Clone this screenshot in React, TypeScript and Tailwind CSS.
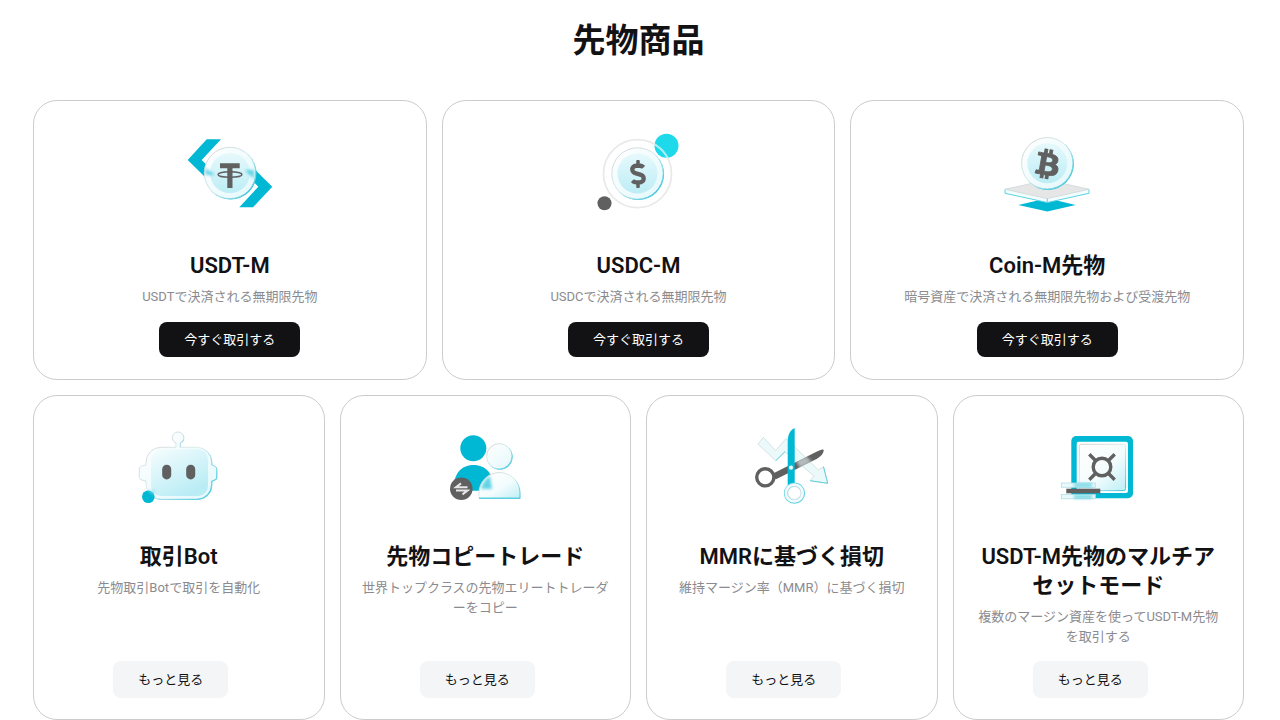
import { ReactNode } from "react";
import { FaBtc, FaDollarSign } from "react-icons/fa";

interface Product {
  title: string;
  text: string;
  icon: ReactNode;
}

// shared gradients, referenced by id from every icon
function Gradients() {
  return (
    <svg className="absolute h-0 w-0" aria-hidden="true">
      <defs>
        <linearGradient id="rim" x1="0" y1="0" x2="1" y2="1">
          <stop offset="0" stopColor="#d2d2d2" />
          <stop offset="0.5" stopColor="#dcecee" />
          <stop offset="1" stopColor="#2fc3da" />
        </linearGradient>
        <linearGradient id="glass" x1="0" y1="0" x2="1" y2="1">
          <stop offset="0" stopColor="#ffffff" />
          <stop offset="0.55" stopColor="#f4fcfd" />
          <stop offset="1" stopColor="#bdeff6" />
        </linearGradient>
        <linearGradient id="pale" x1="0" y1="0" x2="1" y2="1">
          <stop offset="0" stopColor="#ffffff" />
          <stop offset="1" stopColor="#e4f8fb" />
        </linearGradient>
        <linearGradient id="face" x1="0" y1="0" x2="0" y2="1">
          <stop offset="0" stopColor="#e6f9fc" />
          <stop offset="1" stopColor="#bdedf5" />
        </linearGradient>
        <linearGradient id="panel" x1="0" y1="0" x2="0.6" y2="1">
          <stop offset="0" stopColor="#f6fdfe" />
          <stop offset="1" stopColor="#b9ecf5" />
        </linearGradient>
        <filter id="soft" x="-30%" y="-30%" width="160%" height="160%">
          <feGaussianBlur stdDeviation="1.4" />
        </filter>
      </defs>
    </svg>
  );
}

function Icon({ children }: { children: ReactNode }) {
  return (
    <svg
      viewBox="0 0 120 100"
      className="h-[100px] w-[120px] shrink-0"
      fill="none"
      aria-hidden="true"
    >
      {children}
    </svg>
  );
}

function Coin({ cx, cy }: { cx: number; cy: number }) {
  return (
    <>
      <circle cx={cx + 0.6} cy={cy + 0.6} r="26" fill="#35c3d9" />
      <circle cx={cx} cy={cy} r="25.7" fill="url(#pale)" stroke="url(#rim)" />
      <circle cx={cx} cy={cy} r="20" fill="url(#face)" />
    </>
  );
}

const usdtIcon = (
  <Icon>
    <path d="M36.7 14.3H51L31.7 35 48 51H34L17.7 35z" fill="#00b8d4" />
    <path d="M83 82.3H69.3L88.3 61.7 73 45.7H86L102.3 61.7z" fill="#00b8d4" />
    <Coin cx={60} cy={48} />
    <path d="M35 43L45 50H36z" fill="#00b8d4" opacity="0.6" filter="url(#soft)" />
    <path d="M75 45H84V54z" fill="#00b8d4" opacity="0.6" filter="url(#soft)" />
    <path d="M50 38.3H69.7V43.3H62.5V63H57.3V43.3H50z" fill="#606060" />
    <ellipse cx="60" cy="49.5" rx="12" ry="2.8" stroke="#606060" strokeWidth="1.4" />
  </Icon>
);

const usdcIcon = (
  <Icon>
    <circle cx="88.5" cy="20.7" r="12" fill="#1dd9ea" />
    <Coin cx={59.5} cy={48.5} />
    <circle cx="59.5" cy="48.7" r="34" stroke="#e9e9e9" strokeWidth="1.7" />
    <path d="M77 19.8A34 34 0 0 1 89.5 32.5" stroke="#a5eff6" strokeWidth="1.7" />
    <circle cx="26.5" cy="78.3" r="7" fill="#606060" />
    <FaDollarSign x="46" y="35" size={28} color="#606060" />
  </Icon>
);

const coinIcon = (
  <Icon>
    <path d="M31.3 80L60.3 73.3 88.7 80 60.3 86.5z" fill="#00b8d4" />
    <path d="M18 64.3V68.3L60.3 77.5 102 68.3V64.3z" fill="#f2fdff" stroke="#5bd3e3" />
    <path d="M18 64.3L60.3 55 102 64.3 60.3 73.6z" fill="#e6e6e6" stroke="#d6dcdd" />
    <path d="M60.3 73.6V77.5" stroke="#5bd3e3" />
    <Coin cx={60.3} cy={38.3} />
    <g transform="rotate(10 60.3 39)">
      <FaBtc x="45.8" y="24" size={30} color="#606060" stroke="#606060" strokeWidth="14" />
    </g>
  </Icon>
);

const botShape =
  "M42 27.3H57V23A5.7 5.7 0 1 1 61 23V27.3H77.7A15 15 0 0 1 92.7 42.3V45C95 46 97.7 46 97.7 49V57C97.7 60 95 60 92.7 61V64.3A15 15 0 0 1 77.7 79.3H42A15 15 0 0 1 27 64.3V61C24 60 20.3 60 20.3 57V49C20.3 46 24 46 27 45V42.3A15 15 0 0 1 42 27.3z";

const botIcon = (
  <Icon>
    <path d={botShape} transform="translate(0.6 0.6)" fill="#4fcbdd" />
    <path d={botShape} fill="url(#pale)" stroke="url(#rim)" />
    <rect x="32" y="29.3" width="57" height="46.7" rx="10" fill="url(#panel)" />
    <rect x="43.2" y="44.7" width="9" height="14.7" rx="4.5" fill="#606060" />
    <rect x="67.2" y="44.7" width="9" height="14.7" rx="4.5" fill="#606060" />
    <circle cx="29.3" cy="76.7" r="6.3" fill="#00b8d4" />
    <path d="M28 70H36V75z" fill="#9fe3ee" opacity="0.8" filter="url(#soft)" />
  </Icon>
);

const copyIcon = (
  <Icon>
    <circle cx="48.3" cy="28.3" r="13" fill="#00b8d4" />
    <path d="M28.3 70.7C28.3 54 36 45 48.5 45S69 54 69 70.7z" fill="#00b8d4" />
    <circle cx="74.8" cy="36.8" r="12.9" fill="#4fcbdd" />
    <circle cx="74.3" cy="36.3" r="12.7" fill="url(#pale)" stroke="url(#rim)" />
    <path d="M54 78.5V73A20.5 20.5 0 0 1 95 73V78.5z" fill="url(#glass)" stroke="url(#rim)" />
    <path d="M56 69C57 64 60 59 65 56L67 69z" fill="#00b8d4" opacity="0.6" filter="url(#soft)" />
    <path d="M54 78.3H95" stroke="#5ccfe0" strokeWidth="1.4" />
    <circle cx="36.3" cy="68.7" r="11.3" fill="#606060" />
    <path d="M42.5 67.2H31L36 63.4M31 70.6H42.5L37.5 74.4" stroke="#e6e6e6" strokeWidth="2" />
  </Icon>
);

const scissorsIcon = (
  <Icon>
    <path
      d="M31.3 17.3L43.7 30.7 54 18.5 86.3 50 91.5 46.7 95.7 63.3 78 60.7 82 56 53 31.7 43.7 40.7 26 24z"
      fill="#ecf9fb"
      stroke="#d5e3e5"
    />
    <path d="M43.7 40.7L53 31.7M78 60.7L95.7 63.3 91.5 46.7" stroke="#62cfdd" />
    <circle cx="33.3" cy="57.3" r="8.6" stroke="#606060" strokeWidth="3.4" />
    <path d="M41 53.5L86 31C89 29.5 91.7 29 91.7 30 91.7 33 89 36.5 85 38.7L43.5 59.5z" fill="#606060" />
    <path d="M64 41L74 36 80 42 68 48z" fill="#ecf9fb" opacity="0.6" filter="url(#soft)" />
    <path d="M62.7 8.3V65H55.7V22C55.7 14 58.7 9.5 62.7 8.3z" fill="#00b8d4" />
    <circle cx="59" cy="47.7" r="2.1" fill="#e8fafc" />
    <circle cx="62.5" cy="73.2" r="8.6" stroke="#5fcfe0" strokeWidth="4" />
    <circle cx="62.3" cy="73" r="8.4" stroke="#effbfd" strokeWidth="2.8" />
    <circle cx="62.3" cy="73" r="6.5" stroke="#d5dfe1" strokeWidth="0.8" />
  </Icon>
);

const vaultIcon = (
  <Icon>
    <rect x="33.3" y="16" width="61.7" height="62.3" rx="5" fill="#00b8d4" />
    <rect x="38.7" y="21.7" width="51.3" height="51.3" rx="2" fill="#fff" />
    <rect x="41.3" y="24.3" width="46.3" height="46.3" rx="2" fill="url(#glass)" stroke="url(#rim)" />
    <circle cx="64" cy="47" r="8.8" stroke="#606060" strokeWidth="3.4" />
    <path
      d="M51.3 34.3L57.5 40.5M76.7 34.3L70.5 40.5M51.3 59.7L57.5 53.5M76.7 59.7L70.5 53.5"
      stroke="#606060"
      strokeWidth="3.4"
    />
    <rect x="23.3" y="63" width="34" height="4.3" fill="#e9f8fa" stroke="#b2dfe5" strokeWidth="0.8" />
    <rect x="23.3" y="74.5" width="34" height="4.3" fill="#e9f8fa" stroke="#b2dfe5" strokeWidth="0.8" />
    <path d="M36 63.5H54V67H36zM36 75H54V78.5H36z" fill="#00b8d4" opacity="0.5" filter="url(#soft)" />
    <rect x="28.3" y="68.7" width="34" height="4.6" fill="#606060" />
  </Icon>
);

const products: Product[] = [
  { title: "USDT-M", text: "USDTで決済される無期限先物", icon: usdtIcon },
  { title: "USDC-M", text: "USDCで決済される無期限先物", icon: usdcIcon },
  {
    title: "Coin-M先物",
    text: "暗号資産で決済される無期限先物および受渡先物",
    icon: coinIcon,
  },
];

const tools: Product[] = [
  { title: "取引Bot", text: "先物取引Botで取引を自動化", icon: botIcon },
  {
    title: "先物コピートレード",
    text: "世界トップクラスの先物エリートトレーダーをコピー",
    icon: copyIcon,
  },
  {
    title: "MMRに基づく損切",
    text: "維持マージン率（MMR）に基づく損切",
    icon: scissorsIcon,
  },
  {
    title: "USDT-M先物のマルチアセットモード",
    text: "複数のマージン資産を使ってUSDT-M先物を取引する",
    icon: vaultIcon,
  },
];

const cardClass =
  "flex flex-col items-center rounded-3xl border border-[#cccccc] px-5 pt-6 text-center";
const titleClass = "text-[22px] leading-[29px] font-semibold text-[#121214]";
const textClass = "mt-[7px] text-[13px] leading-5 text-[#8b8b8f]";

export default function App() {
  return (
    <main
      lang="ja"
      className="bg-white pt-[19px] pr-9 pl-[33px] font-[Roboto,'Noto_Sans_CJK_JP',sans-serif]"
    >
      <Gradients />
      <h1 className="mb-[37px] text-center text-[33px] leading-[44px] font-bold text-[#121214]">
        先物商品
      </h1>

      <section className="grid grid-cols-3 gap-[15px]">
        {products.map((item) => (
          <article key={item.title} className={`pb-[22px] ${cardClass}`}>
            {item.icon}
            <h2 className={`mt-[26px] ${titleClass}`}>{item.title}</h2>
            <p className={textClass}>{item.text}</p>
            <button
              type="button"
              className="mt-[15px] h-[35px] rounded-lg bg-[#121214] px-[25px] text-[13px] leading-5 text-white"
            >
              今すぐ取引する
            </button>
          </article>
        ))}
      </section>

      <section className="mt-[15px] grid grid-cols-4 gap-[15px]">
        {tools.map((item) => (
          <article key={item.title} className={`pb-[21px] ${cardClass}`}>
            {item.icon}
            <h2 className={`mt-[22px] ${titleClass}`}>{item.title}</h2>
            <p className={`mb-[14px] ${textClass}`}>{item.text}</p>
            <button
              type="button"
              className="mt-auto mr-4 h-[37px] rounded-lg bg-[#f3f5f7] px-[25px] text-[13px] leading-5 text-[#121214]"
            >
              もっと見る
            </button>
          </article>
        ))}
      </section>
    </main>
  );
}
